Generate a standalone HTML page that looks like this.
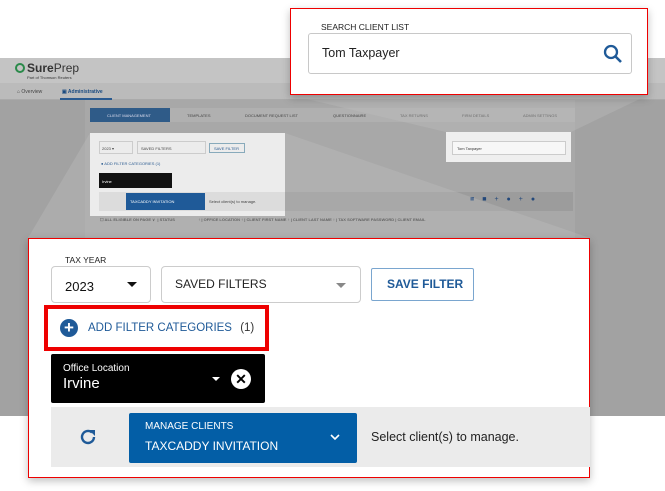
<!DOCTYPE html>
<html><head><style>
*{box-sizing:border-box;margin:0;padding:0}
body{width:665px;height:491px;position:relative;overflow:hidden;background:#fff;font-family:"Liberation Sans",sans-serif}
.a{position:absolute}
.t{font-size:4px;color:#444;position:absolute;white-space:nowrap}
</style></head><body>
<div class="a" style="left:0;top:58px;width:665px;height:358px;background:#a2a2a2"></div>
<div class="a" style="left:0;top:58px;width:665px;height:25px;background:#c4c4c4"></div>
<div class="a" style="left:0;top:83px;width:665px;height:17px;background:#bbb;border-bottom:1px solid #aaa"></div>
<div class="a" style="left:85px;top:100px;width:490px;height:316px;background:#a8a8a8"></div>
<div class="a" style="left:15px;top:63px;width:10px;height:10px;border-radius:50%;border:2px solid #2a8a4a"></div>
<div class="a" style="left:27px;top:61px;font-size:12px;font-weight:bold;color:#333">Sure<span style="font-weight:normal">Prep</span></div>
<div class="a" style="left:27px;top:75px;font-size:4px;color:#333">Part of Thomson Reuters</div>
<div class="a" style="left:17px;top:89px;font-size:5px;color:#444">⌂ Overview</div>
<div class="a" style="left:62px;top:89px;font-size:5px;color:#1a4a80;font-weight:bold">▣ Administrative</div>
<div class="a" style="left:60px;top:98px;width:52px;height:2px;background:#2a5a90"></div>
<div class="a" style="left:90px;top:108px;width:485px;height:14px;background:#b0b0b0"></div>
<div class="a" style="left:90px;top:108px;width:80px;height:14px;background:#2f5b88"></div>
<div class="t" style="left:107px;top:113px;color:#dde">CLIENT MANAGEMENT</div>
<div class="t" style="left:187px;top:113px">TEMPLATES</div>
<div class="t" style="left:245px;top:113px">DOCUMENT REQUEST LIST</div>
<div class="t" style="left:333px;top:113px">QUESTIONNAIRE</div>
<div class="t" style="left:400px;top:113px">TAX RETURNS</div>
<div class="t" style="left:462px;top:113px">FIRM DETAILS</div>
<div class="t" style="left:523px;top:113px">ADMIN SETTINGS</div>
<div class="a" style="left:99px;top:192px;width:474px;height:19px;background:#9c9c9c"></div>
<div class="t" style="left:470px;top:196px;font-size:7px;color:#23487a;letter-spacing:8px">■■+●+●</div>
<div class="t" style="left:100px;top:217px;color:#333;font-weight:bold">☐ ALL ELIGIBLE ON PAGE ∨ &nbsp;| STATUS &nbsp;&nbsp;&nbsp;&nbsp;&nbsp;&nbsp;&nbsp;&nbsp;&nbsp;&nbsp;&nbsp;&nbsp;&nbsp;&nbsp;&nbsp;&nbsp;&nbsp;&nbsp;&nbsp;&nbsp;↑ | OFFICE LOCATION ↑ | CLIENT FIRST NAME ↑ | CLIENT LAST NAME ↑ | TAX SOFTWARE PASSWORD | CLIENT EMAIL</div>
<svg class="a" style="left:0;top:0" width="665" height="491">
<polygon points="90,133 285,133 590,238 28,238" fill="#c0c0c0" opacity="0.35"/>
<polygon points="446,132 571,132 648,95 290,95" fill="#c0c0c0" opacity="0.35"/>
</svg>
<div class="a" style="left:90px;top:133px;width:195px;height:83px;background:#ececec"></div>
<div class="a" style="left:99px;top:141px;width:34px;height:13px;border:1px solid #ccc"></div>
<div class="t" style="left:102px;top:146px">2023 ▾</div>
<div class="a" style="left:137px;top:141px;width:69px;height:13px;border:1px solid #ccc"></div>
<div class="t" style="left:141px;top:146px">SAVED FILTERS</div>
<div class="a" style="left:209px;top:143px;width:36px;height:10px;border:1px solid #8ab"></div>
<div class="t" style="left:214px;top:146px;color:#2a5a90">SAVE FILTER</div>
<div class="t" style="left:101px;top:161px;color:#2a5a90">● ADD FILTER CATEGORIES (1)</div>
<div class="a" style="left:99px;top:173px;width:73px;height:15px;background:#111"></div>
<div class="t" style="left:102px;top:179px;color:#fff">Irvine</div>
<div class="a" style="left:99px;top:192px;width:186px;height:19px;background:#dcdcdc"></div>
<div class="a" style="left:126px;top:193px;width:79px;height:17px;background:#1f5a98"></div>
<div class="t" style="left:130px;top:199px;color:#fff">TAXCADDY INVITATION</div>
<div class="t" style="left:209px;top:199px">Select client(s) to manage.</div>
<div class="a" style="left:446px;top:132px;width:125px;height:30px;background:#efefef"></div>
<div class="a" style="left:452px;top:141px;width:114px;height:14px;border:1px solid #ccc;background:#f7f7f7"></div>
<div class="t" style="left:457px;top:146px;color:#333">Tom Taxpayer</div>
<div class="a" style="left:290px;top:8px;width:358px;height:87px;background:#fff;border:1px solid #e00;box-shadow:0 3px 8px rgba(0,0,0,.25)"></div>
<div class="a" style="left:308px;top:33px;width:324px;height:41px;border:1px solid #c8c8c8;border-radius:3px"></div>
<div class="a" style="left:317px;top:22px;background:#fff;padding:0 4px;font-size:8.5px;color:#222">SEARCH CLIENT LIST</div>
<div class="a" style="left:322px;top:46px;font-size:12.5px;color:#222">Tom Taxpayer</div>
<svg class="a" style="left:603px;top:44px" width="20" height="20"><circle cx="8" cy="8" r="6" fill="none" stroke="#1f5a98" stroke-width="2.3"/><line x1="12.5" y1="12.5" x2="18" y2="18" stroke="#1f5a98" stroke-width="2.6"/></svg>
<div class="a" style="left:28px;top:238px;width:562px;height:240px;background:#fff;border:1px solid #e00;box-shadow:0 3px 8px rgba(0,0,0,.25)"></div>
<div class="a" style="left:51px;top:266px;width:100px;height:37px;border:1px solid #ccc;border-radius:4px"></div>
<div class="a" style="left:61px;top:255px;background:#fff;padding:0 4px;font-size:8.5px;color:#222">TAX YEAR</div>
<div class="a" style="left:65px;top:279px;font-size:13px;color:#111">2023</div>
<div class="a" style="left:127px;top:282px;border:5px solid transparent;border-top:5px solid #111;border-width:5px 5px 0"></div>
<div class="a" style="left:161px;top:266px;width:200px;height:37px;border:1px solid #ccc;border-radius:4px"></div>
<div class="a" style="left:175px;top:277px;font-size:12px;color:#222">SAVED FILTERS</div>
<div class="a" style="left:336px;top:283px;border:5px solid transparent;border-top:5px solid #888;border-width:5px 5px 0"></div>
<div class="a" style="left:371px;top:268px;width:103px;height:33px;border:1px solid #7aa6cf;border-radius:2px"></div>
<div class="a" style="left:387px;top:277px;font-size:12px;font-weight:bold;color:#1f5a98">SAVE FILTER</div>
<div class="a" style="left:44px;top:305px;width:225px;height:46px;border:4px solid #e00"></div>
<div class="a" style="left:60px;top:319px;width:18px;height:18px;border-radius:50%;background:#1f5a98;color:#fff;font-size:17px;line-height:17px;text-align:center;font-weight:bold">+</div>
<div class="a" style="left:88px;top:322px;font-size:11.5px;color:#1f5a98;white-space:nowrap">ADD FILTER CATEGORIES <span style="color:#333;margin-left:5px">(1)</span></div>
<div class="a" style="left:51px;top:354px;width:214px;height:49px;background:#000;border-radius:2px"></div>
<div class="a" style="left:63px;top:363px;font-size:10px;color:#fff">Office Location</div>
<div class="a" style="left:63px;top:375px;font-size:15px;color:#fff">Irvine</div>
<div class="a" style="left:212px;top:377px;border:4px solid transparent;border-top:4px solid #fff;border-width:4px 4px 0"></div>
<div class="a" style="left:231px;top:369px;width:20px;height:20px;border-radius:50%;background:#fff;color:#000;font-size:14px;line-height:20px;text-align:center;font-weight:bold">✕</div>
<div class="a" style="left:51px;top:407px;width:539px;height:60px;background:#ebebeb"></div>
<svg class="a" style="left:80px;top:428px" width="18" height="18"><path d="M14 9 A6 6 0 1 1 12 4.5" fill="none" stroke="#1f5a98" stroke-width="2.4"/><path d="M9 2 L15 2 L15 8 Z" fill="#1f5a98"/></svg>
<div class="a" style="left:129px;top:413px;width:228px;height:50px;background:#035ea6;border-radius:2px"></div>
<div class="a" style="left:145px;top:421px;font-size:10px;color:#fff">MANAGE CLIENTS</div>
<div class="a" style="left:145px;top:439px;font-size:12px;color:#fff">TAXCADDY INVITATION</div>
<svg class="a" style="left:330px;top:434px" width="10" height="7"><path d="M1 1 L5 5 L9 1" fill="none" stroke="#fff" stroke-width="1.6"/></svg>
<div class="a" style="left:371px;top:430px;font-size:12.5px;color:#222">Select client(s) to manage.</div>
</body></html>
